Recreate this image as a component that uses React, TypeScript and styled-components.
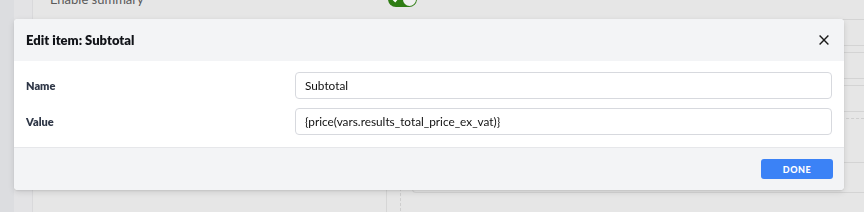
import React from "react";
import styled, { createGlobalStyle } from "styled-components";

const Global = createGlobalStyle`
  html, body { margin: 0; padding: 0; }
  body {
    width: 864px; height: 212px; overflow: hidden;
    background: #dcdde0;
    font-family: Lato, "Noto Sans", Arial, sans-serif;
  }
  * { box-sizing: border-box; }
`;

const Page = styled.div`
  display: grid;
  grid-template-columns: 14px 18px 1fr;
  height: 212px;
  overflow: hidden;
`;

const Strip = styled.div<{ $tone: string }>`
  background: ${(p) => p.$tone};
`;

const Panel = styled.div`
  background: #e6e6e6;
  border-left: 1px solid #d9d9db;
  display: flex;
  flex-direction: column;
  overflow: hidden;
`;

const SummaryRow = styled.div`
  height: 20px;
  display: flex;
  align-items: flex-start;
  padding-left: 17px;
  border-bottom: 1px solid #d6d6d6;
`;

const SummaryLabel = styled.span`
  width: 338px;
  margin-top: -9px;
  font-size: 13px;
  color: #5a5a5a;
`;

const Toggle = styled.div`
  width: 29px;
  height: 16px;
  margin-top: -9px;
  border-radius: 8px;
  background: #2f7d14;
  display: flex;
  align-items: center;
  justify-content: space-between;
  padding: 0 1px 0 4px;
`;

const Knob = styled.div`
  width: 13px;
  height: 13px;
  border-radius: 50%;
  background: #f0f0f0;
`;

const Split = styled.div`
  flex: 1;
  display: grid;
  grid-template-columns: 354px 1fr;
`;

const LeftCol = styled.div`
  border-right: 1px solid #d6d6d6;
`;

const RightCol = styled.div`
  padding-left: 13px;
`;

const Dashed = styled.div`
  height: 100%;
  border-left: 1px dashed #cfcfcf;
  padding-left: 11px;
  display: flex;
  flex-direction: column;
  gap: 6px;
  margin-top: -1px;
  margin-right: -20px;
`;

const Card = styled.div<{ $h: number }>`
  height: ${(p) => p.$h}px;
  border: 1px solid #d4d4d4;
  border-right: 0;
  border-radius: 4px 0 0 4px;
`;

const DashLine = styled.div`
  border-top: 1px dashed #cfcfcf;
  height: 38px;
`;

const VarBox = styled.div`
  height: 31px;
  border: 1px solid #d4d4d4;
  border-right: 0;
  border-radius: 0 0 0 4px;
  padding: 9px 0 0 8px;
  font-size: 12px;
  font-weight: 700;
  color: #333;
`;

const Modal = styled.div`
  position: fixed;
  top: 19px;
  left: 14px;
  width: 830px;
  background: #fff;
  border-radius: 4px;
  overflow: hidden;
  box-shadow: 0 2px 6px rgba(0, 0, 0, 0.12), 0 1px 2px rgba(0, 0, 0, 0.08);
`;

const Header = styled.div`
  height: 42px;
  background: #f3f4f6;
  display: flex;
  align-items: center;
  justify-content: space-between;
  padding: 0 15px 0 12px;
`;

const Title = styled.h2`
  margin: 0;
  font-size: 13px;
  font-weight: 800;
  color: #111318;
`;

const Close = styled.button`
  border: 0;
  background: none;
  padding: 0;
  width: 10px;
  height: 10px;
  display: flex;
  cursor: pointer;
`;

const Body = styled.div`
  padding: 11px 12px 12px 12px;
  display: grid;
  grid-template-columns: 269px 1fr;
  row-gap: 9px;
  align-items: center;
`;

const Label = styled.label`
  font-size: 11px;
  font-weight: 800;
  color: #2f3747;
`;

const Input = styled.input`
  height: 27px;
  width: 100%;
  border: 1px solid #d7d9de;
  border-radius: 4px;
  padding: 0 9px;
  font-family: Lato, "Noto Sans", Arial, sans-serif;
  font-size: 11.8px;
  color: #111;
  background: #fff;
  outline: none;
`;

const Footer = styled.div`
  height: 43px;
  background: #f3f4f6;
  border-top: 1px solid #e6e7ea;
  display: flex;
  align-items: center;
  justify-content: flex-end;
  padding: 0 11px;
`;

const Done = styled.button`
  width: 72px;
  height: 20px;
  border: 0;
  border-radius: 3px;
  background: #3b82f6;
  color: #fff;
  font-family: Lato, "Noto Sans", Arial, sans-serif;
  font-size: 9px;
  font-weight: 900;
  letter-spacing: 0.5px;
  cursor: pointer;
`;

export default function App() {
  return (
    <>
      <Global />
      <Page>
        <Strip $tone="#dcdde0" />
        <Strip $tone="#e3e3e5" />
        <Panel>
          <SummaryRow>
            <SummaryLabel>Enable summary</SummaryLabel>
            <Toggle>
              <svg width="8" height="8" viewBox="0 0 8 8">
                <path d="M1 4.2 L3.2 6.3 L7 1.8" stroke="#fff" strokeWidth="1.6" fill="none" />
              </svg>
              <Knob />
            </Toggle>
          </SummaryRow>
          <Split>
            <LeftCol />
            <RightCol>
              <Dashed>
                <Card $h={27} />
                <Card $h={27} />
                <Card $h={27} />
                <DashLine />
                <VarBox>Var</VarBox>
              </Dashed>
            </RightCol>
          </Split>
        </Panel>
      </Page>
      <Modal>
        <Header>
          <Title>Edit item: Subtotal</Title>
          <Close aria-label="Close">
            <svg width="10" height="10" viewBox="0 0 10 10">
              <path d="M0.6 0.6 L9.4 9.4 M9.4 0.6 L0.6 9.4" stroke="#1a1a1a" strokeWidth="1.4" />
            </svg>
          </Close>
        </Header>
        <Body>
          <Label>Name</Label>
          <Input defaultValue="Subtotal" />
          <Label>Value</Label>
          <Input defaultValue="{price(vars.results_total_price_ex_vat)}" />
        </Body>
        <Footer>
          <Done>DONE</Done>
        </Footer>
      </Modal>
    </>
  );
}
